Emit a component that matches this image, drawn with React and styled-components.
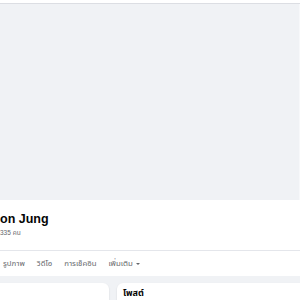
import React from "react";
import styled, { createGlobalStyle } from "styled-components";

const Global = createGlobalStyle`
  html, body { margin: 0; padding: 0; background: #f0f2f5; overflow: hidden; }
  body { font-family: "Liberation Sans", "Noto Sans", "Noto Sans Thai", sans-serif; }
`;

const Page = styled.div`
  width: 300px;
  height: 300px;
  display: flex;
  flex-direction: column;
  overflow: hidden;
  background: #f0f2f5;
`;

const TopBar = styled.div`
  height: 3px;
  background: #ffffff;
  border-bottom: 1px solid #dcdee3;
  flex-shrink: 0;
`;

const Cover = styled.div`
  height: 196px;
  background: #f0f2f5;
  border-right: 1px solid #f7f8fa;
  flex-shrink: 0;
`;

const Header = styled.div`
  background: #ffffff;
  flex-shrink: 0;
`;

const NameBlock = styled.div`
  height: 50px;
  box-sizing: border-box;
  padding-top: 11px;
  display: flex;
  flex-direction: column;
`;

const Name = styled.div`
  font-size: 12.5px;
  font-weight: 700;
  color: #050505;
  line-height: 16px;
`;

const Friends = styled.div`
  margin-top: 2px;
  font-size: 6.5px;
  color: #65676b;
  line-height: 8px;
`;

const Divider = styled.div`
  height: 1px;
  background: #e4e6eb;
`;

const Tabs = styled.div`
  height: 25px;
  display: flex;
  align-items: center;
  gap: 12px;
  padding-left: 3px;
`;

const Tab = styled.div`
  font-size: 7.8px;
  color: #65676b;
  font-weight: 400;
  display: flex;
  align-items: center;
  gap: 3px;
`;

const Caret = styled.span`
  width: 0;
  height: 0;
  border-left: 2px solid transparent;
  border-right: 2px solid transparent;
  border-top: 2.5px solid #65676b;
`;

const Body = styled.div`
  display: grid;
  grid-template-columns: 109px 1fr;
  gap: 8px;
  padding-top: 7px;
  flex: 1;
`;

const Card = styled.div`
  background: #ffffff;
  border-radius: ${(p) => (p.$left ? "0 6px 0 0" : "6px 0 0 0")};
  box-shadow: 0 1px 2px rgba(0, 0, 0, 0.12);
  min-height: 40px;
  padding: 3px 0 0 6px;
  box-sizing: border-box;
`;

const CardTitle = styled.div`
  font-size: 9px;
  font-weight: 700;
  color: #050505;
  line-height: 14px;
`;

export default function App() {
  return (
    <Page>
      <Global />
      <TopBar />
      <Cover />
      <Header>
        <NameBlock>
          <Name>on Jung</Name>
          <Friends>335 คน</Friends>
        </NameBlock>
        <Divider />
        <Tabs>
          <Tab>รูปภาพ</Tab>
          <Tab>วิดีโอ</Tab>
          <Tab>การเช็คอิน</Tab>
          <Tab>
            เพิ่มเติม <Caret />
          </Tab>
        </Tabs>
      </Header>
      <Body>
        <Card $left />
        <Card>
          <CardTitle>โพสต์</CardTitle>
        </Card>
      </Body>
    </Page>
  );
}
